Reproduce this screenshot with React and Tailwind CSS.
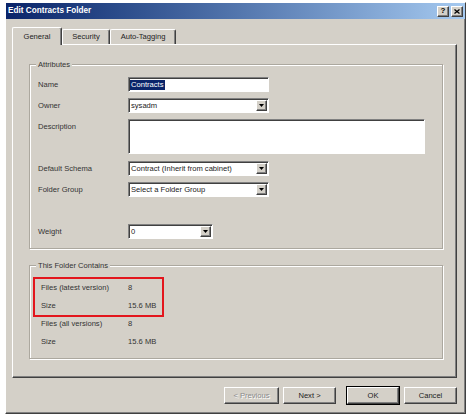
import React from "react";

const raised =
  "border border-t-white border-l-white border-r-[#404040] border-b-[#404040] shadow-[inset_-1px_-1px_0_#808080]";
const sunken =
  "border border-t-[#808080] border-l-[#808080] border-r-white border-b-white shadow-[inset_1px_1px_0_#404040]";
const etched = "border border-[#aca89f] shadow-[1px_1px_0_#fff,inset_1px_1px_0_#fff]";

const Arrow = () => (
  <span className={`${raised} w-[11px] h-full flex items-center justify-center bg-[#d4d0c8]`}>
    <svg width="5" height="3" viewBox="0 0 5 3">
      <path d="M0 0h5L2.5 3z" fill="#000" />
    </svg>
  </span>
);

const Select = ({ value, w = "w-[141px]" }) => (
  <div className={`${sunken} ${w} h-[15px] bg-white flex items-stretch py-[1px] pr-[1px]`}>
    <span className="flex-1 pl-[2px] leading-[11px] text-[#222] truncate">{value}</span>
    <Arrow />
  </div>
);

const Row = ({ label, children, className = "" }) => (
  <div className={`flex ${className}`}>
    <div className="w-[90px] h-[15px] flex items-center text-[#333]">{label}</div>
    {children}
  </div>
);

const Stat = ({ label, value }) => (
  <div className="flex h-[18px] items-center text-[#333]">
    <span className="w-[87px]">{label}</span>
    <span>{value}</span>
  </div>
);

const Btn = ({ children, w, isDefault, disabled }) => (
  <div
    className={`${w} h-[17px] flex items-center justify-center ${
      isDefault ? "outline outline-1 outline-black" : ""
    } ${raised} ${disabled ? "text-[#8a8a8a] [text-shadow:1px_1px_0_#fff]" : "text-[#222]"}`}
  >
    {children}
  </div>
);

const Tab = ({ label, w, active }) => (
  <div
    className={`${w} flex items-center justify-center border border-t-white border-l-white border-r-[#404040] border-b-0 rounded-t-[2px] shadow-[inset_-1px_0_0_#808080] bg-[#d4d0c8] text-[#222] ${
      active ? "h-[18px] -mb-[1px] relative z-10" : "h-[15px]"
    }`}
  >
    {label}
  </div>
);

export default function App() {
  return (
    <div className="w-[472px] h-[419px] bg-white pt-[2px] pl-[5px] font-['Liberation_Sans',Arial,sans-serif] text-[7.6px] leading-none">
      <div className={`w-[461px] h-[412px] bg-[#d4d0c8] ${raised} flex flex-col`}>
        {/* title bar */}
        <div className="h-[16px] flex items-center bg-gradient-to-r from-[#0a246a] to-[#a6caf0] pl-[2px] pr-[2px]">
          <span className="flex-1 text-white font-bold text-[8.2px]">Edit Contracts Folder</span>
          <div className="flex gap-[2px]">
            <span className={`${raised} w-[12px] h-[11px] bg-[#d4d0c8] flex items-center justify-center font-bold text-[8px] text-black`}>
              ?
            </span>
            <span className={`${raised} w-[12px] h-[11px] bg-[#d4d0c8] flex items-center justify-center`}>
              <svg width="6" height="5" viewBox="0 0 6 5">
                <path d="M0.5 0.5l5 4M5.5 0.5l-5 4" stroke="#000" strokeWidth="1.3" />
              </svg>
            </span>
          </div>
        </div>

        {/* tabs */}
        <div className="mt-[9px] ml-[6px] h-[16px] flex items-end">
          <Tab label="General" w="w-[50px]" active />
          <Tab label="Security" w="w-[48px]" />
          <Tab label="Auto-Tagging" w="w-[66px]" />
        </div>

        {/* panel */}
        <div className={`ml-[6px] w-[445px] h-[334px] ${raised} pl-[16px] pt-[19px]`}>
          <div className={`relative w-[414px] h-[185px] ${etched} pl-[8px] pt-[12px]`}>
            <span className="absolute -top-[5px] left-[6px] px-[2px] bg-[#d4d0c8] leading-[9px] text-[#333]">
              Attributes
            </span>
            <Row label="Name">
              <div className={`${sunken} w-[141px] h-[15px] bg-white flex items-center pl-[1px]`}>
                <span className="bg-[#0a246a] text-white px-[1px] leading-[10px]">Contracts</span>
              </div>
            </Row>
            <Row label="Owner" className="mt-[6px]">
              <Select value="sysadm" />
            </Row>
            <Row label="Description" className="mt-[6px]">
              <div className={`${sunken} w-[297px] h-[35px] bg-white`} />
            </Row>
            <Row label="Default Schema" className="mt-[7px]">
              <Select value="Contract (Inherit from cabinet)" />
            </Row>
            <Row label="Folder Group" className="mt-[6px]">
              <Select value="Select a Folder Group" />
            </Row>
            <Row label="Weight" className="mt-[27px]">
              <Select value="0" w="w-[85px]" />
            </Row>
          </div>

          <div className={`relative mt-[16px] w-[414px] h-[94px] ${etched} pl-[3px] pt-[11px]`}>
            <span className="absolute -top-[5px] left-[6px] px-[2px] bg-[#d4d0c8] leading-[9px] text-[#333]">
              This Folder Contains
            </span>
            <div className="w-[131px] border-2 border-[#e3161d] pl-[6px]">
              <Stat label="Files (latest version)" value="8" />
              <Stat label="Size" value="15.6 MB" />
            </div>
            <div className="pl-[8px] -mt-[2px]">
              <Stat label="Files (all versions)" value="8" />
              <Stat label="Size" value="15.6 MB" />
            </div>
          </div>
        </div>

        {/* buttons */}
        <div className="mt-[9px] ml-[6px] w-[445px] flex justify-end">
          <Btn w="w-[55px]" disabled>
            &lt; Previous
          </Btn>
          <div className="w-[4px]" />
          <Btn w="w-[53px]">Next &gt;</Btn>
          <div className="w-[11px]" />
          <Btn w="w-[52px]" isDefault>
            OK
          </Btn>
          <div className="w-[5px]" />
          <Btn w="w-[53px]">Cancel</Btn>
        </div>
      </div>
    </div>
  );
}
